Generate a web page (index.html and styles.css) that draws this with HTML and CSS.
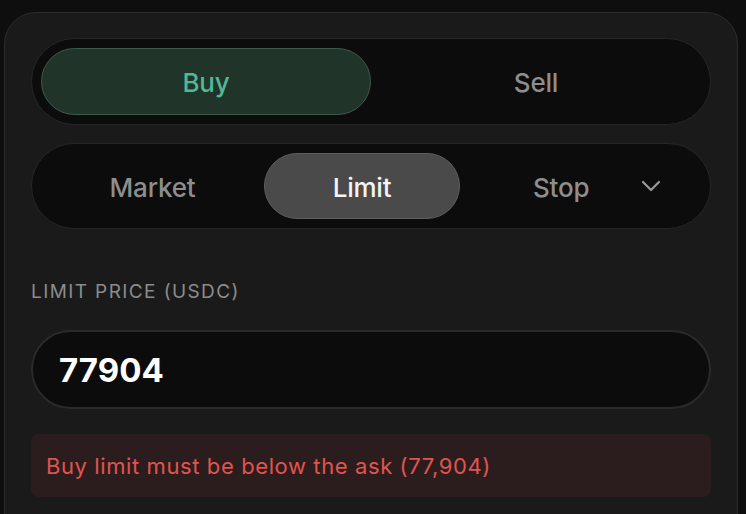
FILE: index.html
```html
<!DOCTYPE html>
<html lang="en">
<head>
<meta charset="utf-8">
<title>Order</title>
<link rel="stylesheet" href="styles.css">
</head>
<body>
<div class="card">
  <div class="seg side">
    <button class="opt buy active">Buy</button>
    <button class="opt">Sell</button>
  </div>
  <div class="seg types">
    <button class="opt">Market</button>
    <button class="opt active-grey">Limit</button>
    <button class="opt stop"><span>Stop</span>
      <svg class="chev" width="20" height="12" viewBox="0 0 20 12"><polyline points="2,2 10,10 18,2" fill="none" stroke="currentColor" stroke-width="2.2" stroke-linecap="round" stroke-linejoin="round"/></svg>
    </button>
  </div>
  <div class="label">LIMIT PRICE (USDC)</div>
  <div class="input">77904</div>
  <div class="error">Buy limit must be below the ask (77,904)</div>
</div>
</body>
</html>
```
FILE: styles.css
```css
* { box-sizing: border-box; }
html, body { margin: 0; padding: 0; }
body {
  background: #0e0e0e;
  font-family: Inter, "Noto Sans", sans-serif;
  width: 746px;
  height: 514px;
  overflow: hidden;
}
.card {
  margin: 12px 0 0 4px;
  width: 734px;
  height: 560px;
  background: #1a1a1a;
  border: 1px solid #2c2c2c;
  border-radius: 32px;
  padding: 25px 26px 0 26px;
}
.seg {
  height: 87px;
  background: #0c0c0c;
  border: 1px solid #262626;
  border-radius: 44px;
  padding: 9px;
  display: grid;
  grid-template-columns: 1fr 1fr;
}
.types {
  margin-top: 18px;
  height: 86px;
  grid-template-columns: 223px 196px 1fr;
}
.opt {
  font-family: inherit;
  font-size: 26px;
  font-weight: 500;
  color: #8e8e8e;
  background: transparent;
  border: 1px solid transparent;
  border-radius: 34px;
  padding: 2px 0 0 0;
  display: flex;
  align-items: center;
  justify-content: center;
  letter-spacing: -0.2px;
}
.buy.active {
  background: #203429;
  border-color: #3d5a4e;
  color: #52b893;
}
.active-grey {
  background: #4a4a4a;
  border-color: #5e5e5e;
  color: #f4f4f4;
}
.stop {
  justify-content: space-between;
  padding: 0 39px 0 72px;
}
.stop span { padding-top: 2px; }
.chev { color: #9a9a9a; }
.label {
  margin-top: 52px;
  font-size: 19px;
  line-height: 22px;
  letter-spacing: 1.4px;
  color: #8c8c8c;
}
.input {
  margin-top: 27px;
  height: 79px;
  background: #0c0c0c;
  border: 2px solid #2a2a2a;
  border-radius: 40px;
  padding: 0 26px;
  display: flex;
  align-items: center;
  font-size: 33px;
  font-weight: 700;
  color: #ffffff;
}
.error {
  margin-top: 25px;
  height: 63px;
  background: #2b1d1d;
  border-radius: 8px;
  padding: 0 15px;
  display: flex;
  align-items: center;
  font-size: 22px;
  letter-spacing: 0.6px;
  color: #e0544f;
}
```
